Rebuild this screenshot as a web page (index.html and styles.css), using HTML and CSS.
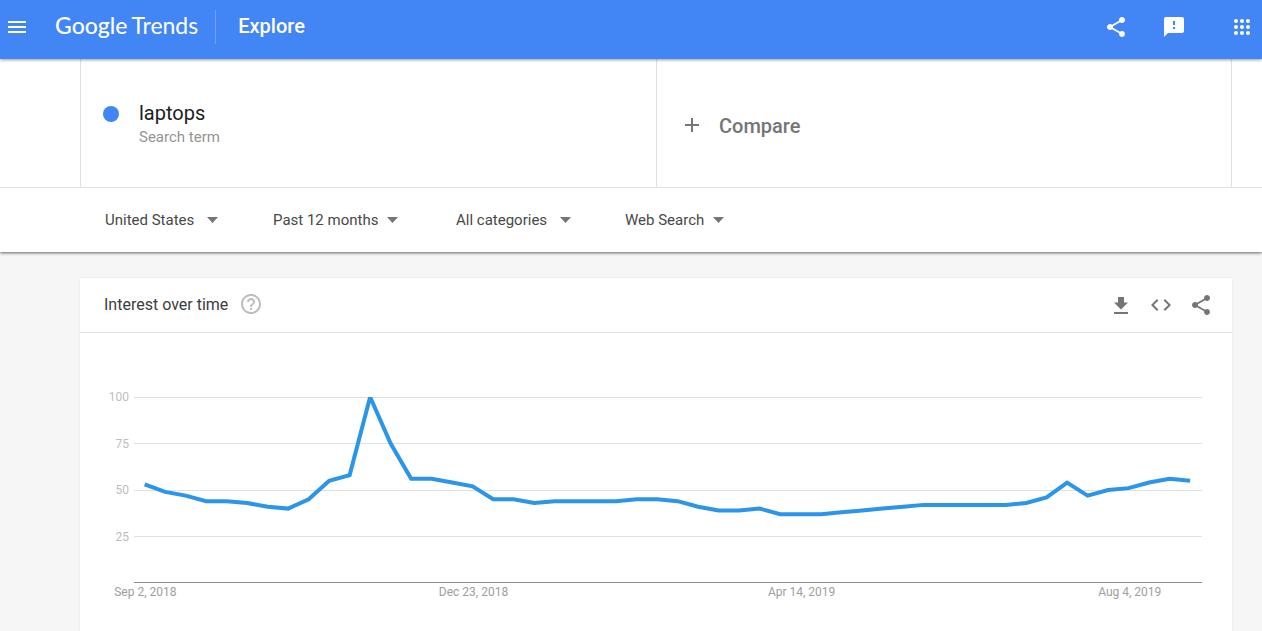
FILE: index.html
```html
<!DOCTYPE html>
<html lang="en">
<head>
<meta charset="utf-8">
<meta name="viewport" content="width=device-width, initial-scale=1">
<title>laptops - Explore - Google Trends</title>
<link rel="stylesheet" href="styles.css">
</head>
<body>
<header class="topbar">
  <button class="icon-btn menu-btn" aria-label="Menu">
    <svg width="24" height="24" viewBox="0 0 24 24"><path d="M3 18h18v-2H3v2zm0-5h18v-2H3v2zm0-7v2h18V6H3z"/></svg>
  </button>
  <a class="brand" href="#"><span class="brand-google">Google</span><span class="brand-product">Trends</span></a>
  <a class="section-link" href="#">Explore</a>
  <div class="topbar-actions">
    <button class="icon-btn" aria-label="Share">
      <svg width="24" height="24" viewBox="0 0 24 24"><path d="M18 16.08c-.76 0-1.440.3-1.960.77L8.910 12.700c.05-.23.09-.46.09-.7s-.04-.47-.09-.7l7.050-4.110c.54.5 1.250.81 2.040.81 1.660 0 3-1.340 3-3s-1.340-3-3-3-3 1.340-3 3c0 .24.04.47.09.7L8.040 9.810C7.500 9.310 6.790 9 6 9c-1.660 0-3 1.340-3 3s1.340 3 3 3c.79 0 1.500-.31 2.040-.81l7.120 4.160c-.05.21-.08.43-.08.65 0 1.610 1.310 2.920 2.920 2.920s2.920-1.310 2.920-2.920-1.310-2.920-2.920-2.920z"/></svg>
    </button>
    <button class="icon-btn" aria-label="Send feedback">
      <svg width="24" height="24" viewBox="0 0 24 24"><path d="M20 2H4c-1.100 0-1.990.9-1.990 2L2 22l4-4h14c1.100 0 2-.9 2-2V4c0-1.100-.9-2-2-2zm-7 12h-2v-2h2v2zm0-4h-2V6h2v4z"/></svg>
    </button>
    <button class="icon-btn apps-btn" aria-label="Google apps">
      <svg width="24" height="24" viewBox="0 0 24 24"><circle cx="6" cy="6" r="2"/><circle cx="12" cy="6" r="2"/><circle cx="18" cy="6" r="2"/><circle cx="6" cy="12" r="2"/><circle cx="12" cy="12" r="2"/><circle cx="18" cy="12" r="2"/><circle cx="6" cy="18" r="2"/><circle cx="12" cy="18" r="2"/><circle cx="18" cy="18" r="2"/></svg>
    </button>
  </div>
</header>

<section class="controls">
  <div class="terms">
    <div class="terms-inner">
      <div class="term">
        <span class="term-dot"></span>
        <div>
          <h1 class="term-name">laptops</h1>
          <p class="term-type">Search term</p>
        </div>
      </div>
      <button class="compare">
        <svg width="24" height="24" viewBox="0 0 24 24"><path d="M19 12h-6v6h-2v-6H5v-2h6V4h2v6h6v2z"/></svg>
        Compare
      </button>
    </div>
  </div>
  <div class="filters">
    <label class="filter">
      <select aria-label="Location"><option>United States</option></select>
      <svg width="11" height="6" viewBox="0 0 12 6" preserveAspectRatio="none"><path d="M0 0h12L6 6z"/></svg>
    </label>
    <label class="filter filter-tight">
      <select aria-label="Time range"><option>Past 12 months</option></select>
      <svg width="11" height="6" viewBox="0 0 12 6" preserveAspectRatio="none"><path d="M0 0h12L6 6z"/></svg>
    </label>
    <label class="filter">
      <select aria-label="Category"><option>All categories</option></select>
      <svg width="11" height="6" viewBox="0 0 12 6" preserveAspectRatio="none"><path d="M0 0h12L6 6z"/></svg>
    </label>
    <label class="filter filter-tight">
      <select aria-label="Search type"><option>Web Search</option></select>
      <svg width="11" height="6" viewBox="0 0 12 6" preserveAspectRatio="none"><path d="M0 0h12L6 6z"/></svg>
    </label>
  </div>
</section>

<main class="content">
  <section class="card">
    <div class="card-head">
      <h2 class="card-title">Interest over time</h2>
      <button class="icon-btn help-btn" aria-label="Help">
        <svg width="24" height="24" viewBox="0 0 24 24"><path d="M11 18h2v-2h-2v2zm1-16C6.480 2 2 6.480 2 12s4.480 10 10 10 10-4.480 10-10S17.520 2 12 2zm0 18c-4.410 0-8-3.590-8-8s3.590-8 8-8 8 3.590 8 8-3.590 8-8 8zm0-14c-2.210 0-4 1.790-4 4h2c0-1.100.9-2 2-2s2 .9 2 2c0 2-3 1.750-3 5h2c0-2.250 3-2.500 3-5 0-2.210-1.790-4-4-4z"/></svg>
      </button>
      <div class="card-actions">
        <button class="icon-btn" aria-label="Download CSV">
          <svg width="24" height="24" viewBox="0 0 24 24"><path d="M19 9.500h-4V4H9v5.500H5l7 7zM5 19v2h14v-2z"/></svg>
        </button>
        <button class="icon-btn" aria-label="Embed">
          <svg width="24" height="24" viewBox="0 0 24 24"><path d="M9.400 16.600L4.800 12l4.600-4.600L8 6l-6 6 6 6 1.400-1.400zm5.200 0l4.600-4.600-4.600-4.600L16 6l6 6-6 6-1.400-1.400z"/></svg>
        </button>
        <button class="icon-btn" aria-label="Share chart">
          <svg width="24" height="24" viewBox="0 0 24 24"><path d="M18 16.080c-.76 0-1.440.3-1.960.77L8.910 12.700c.05-.23.09-.46.09-.7s-.04-.47-.09-.7l7.050-4.110c.54.5 1.250.81 2.040.81 1.660 0 3-1.340 3-3s-1.340-3-3-3-3 1.340-3 3c0 .24.04.47.09.7L8.040 9.810C7.500 9.310 6.790 9 6 9c-1.660 0-3 1.340-3 3s1.340 3 3 3c.79 0 1.500-.31 2.040-.81l7.120 4.160c-.05.21-.08.43-.08.65 0 1.610 1.310 2.920 2.920 2.920s2.920-1.310 2.920-2.920-1.310-2.920-2.920-2.920z"/></svg>
        </button>
      </div>
    </div>
    <div class="chart">
      <div class="y-axis"><span>100</span><span>75</span><span>50</span><span>25</span></div>
      <div class="plot">
        <div class="gridlines"><i></i><i></i><i></i><i></i></div>
        <!-- One x unit per week; y is 100 minus the interest value. -->
        <svg class="series" viewBox="-0.52 0 52.1 100" preserveAspectRatio="none" role="img" aria-label="Weekly interest in laptops">
          <polyline points="0,47 1,51 2,53 3,56 4,56 5,57 6,59 7,60 8,55 9,45 10,42 11,0 12,25 13,44 14,44 15,46 16,48 17,55 18,55 19,57 20,56 21,56 22,56 23,56 24,55 25,55 26,56 27,59 28,61 29,61 30,60 31,63 32,63 33,63 34,62 35,61 36,60 37,59 38,58 39,58 40,58 41,58 42,58 43,57 44,54 45,46 46,53 47,50 48,49 49,46 50,44 51,45"/>
        </svg>
      </div>
      <div class="x-axis"><span>Sep 2, 2018</span><span>Dec 23, 2018</span><span>Apr 14, 2019</span><span>Aug 4, 2019</span></div>
    </div>
  </section>
</main>
</body>
</html>
```
FILE: styles.css
```css
* { box-sizing: border-box; }

body {
  margin: 0;
  min-height: 100vh;
  display: flex;
  flex-direction: column;
  overflow-x: hidden;
  background: #f6f6f6;
  color: #212121;
  font-family: Roboto, "Liberation Sans", sans-serif;
}

h1, h2, p { margin: 0; font-weight: 400; }

button, select {
  border: 0;
  padding: 0;
  background: none;
  font: inherit;
  color: inherit;
  cursor: pointer;
}

svg { display: block; fill: currentColor; }

/* Top bar */
.topbar {
  position: relative;
  z-index: 1;
  display: flex;
  align-items: center;
  height: 59px;
  padding: 0 8px 6px 5px;
  background: #4285f4;
  color: #fff;
  box-shadow: 0 1px 3px rgba(0, 0, 0, 0.4);
}

.topbar a { color: inherit; text-decoration: none; }

.brand {
  display: flex;
  gap: 4px;
  margin-left: 26px;
  padding: 0 17px 4px 0;
  font: 23px/30px Lato, sans-serif;
}

.brand-google { font-weight: 500; }

.section-link {
  padding: 0 0 2px 22px;
  border-left: 1px solid #6ea1f7;
  font-size: 20px;
  line-height: 32px;
  font-weight: 500;
}

.topbar-actions {
  display: flex;
  gap: 34px;
  margin-left: auto;
}

.apps-btn { margin-left: 10px; }

/* Search terms and filters */
.controls {
  background: #fff;
  box-shadow: 0 1px 3px rgba(0, 0, 0, 0.6);
}

.terms {
  padding: 0 30px 0 80px;
  border-bottom: 1px solid #e0e0e0;
}

.terms-inner {
  display: grid;
  grid-template-columns: 1fr 1fr;
  height: 128px;
  border: solid #e0e0e0;
  border-width: 0 1px;
}

.term {
  display: flex;
  gap: 20px;
  padding: 42px 0 0 22px;
}

.term-dot {
  width: 16px;
  height: 16px;
  margin-top: 5px;
  border-radius: 50%;
  background: #4285f4;
}

.term-name { font-size: 20px; line-height: 24px; }

.term-type {
  color: #949494;
  font-size: 15px;
  line-height: 24px;
}

.compare {
  display: flex;
  align-items: center;
  gap: 15px;
  padding: 6px 0 0 23px;
  border-left: 1px solid #e0e0e0;
  color: #757575;
  font-size: 20px;
  font-weight: 500;
}

.filters {
  display: grid;
  grid-template-columns: 168px 183px 169px auto;
  align-items: center;
  height: 64px;
  padding-left: 105px;
  color: #484848;
  font-size: 15px;
}

.filter { display: flex; align-items: center; gap: 12px; }
.filter-tight { gap: 8px; }
.filter select { appearance: none; line-height: 24px; }
.filter svg { color: #757575; }

/* Chart card */
.content { flex: 1; display: flex; padding: 26px 30px 0 80px; }

.card {
  flex: 1;
  background: #fff;
  box-shadow: 0 0 2px rgba(0, 0, 0, 0.08);
}

.card-head {
  display: flex;
  align-items: center;
  height: 55px;
  padding: 0 19px 0 24px;
  border-bottom: 1px solid #e0e0e0;
}

.card-title { color: #3c3c3c; font-size: 16px; line-height: 24px; }
.help-btn { margin-left: 11px; padding-bottom: 3px; color: #bdbdbd; }
.card-actions { display: flex; gap: 16px; margin-left: auto; color: #757575; }

.chart {
  display: grid;
  grid-template-columns: 54px 1fr;
  padding: 64px 30px 32px 0;
  font-size: 12px;
  line-height: 16px;
}

.y-axis {
  display: grid;
  grid-template-rows: repeat(4, 1fr);
  height: 186px;
  margin-top: -8px;
  padding-right: 5px;
  color: #bdbdbd;
  text-align: right;
}

.plot { display: grid; height: 186px; }
.gridlines, .series { grid-area: 1 / 1; width: 100%; height: 186px; }

.gridlines {
  display: grid;
  grid-template-rows: repeat(4, 1fr);
  border-bottom: 1px solid #8f8f8f;
}

.gridlines i { border-top: 1px solid #e0e0e0; }

.series polyline {
  fill: none;
  stroke: #2b95e9;
  stroke-width: 4px;
  vector-effect: non-scaling-stroke;
}

/* Each cell is 16 weeks wide and centred on its tick. */
.x-axis {
  grid-column: 2;
  display: grid;
  grid-template-columns: repeat(4, 1fr);
  margin: 1px -8.6% 0 -14.3%;
  color: #9e9e9e;
  text-align: center;
}
```
